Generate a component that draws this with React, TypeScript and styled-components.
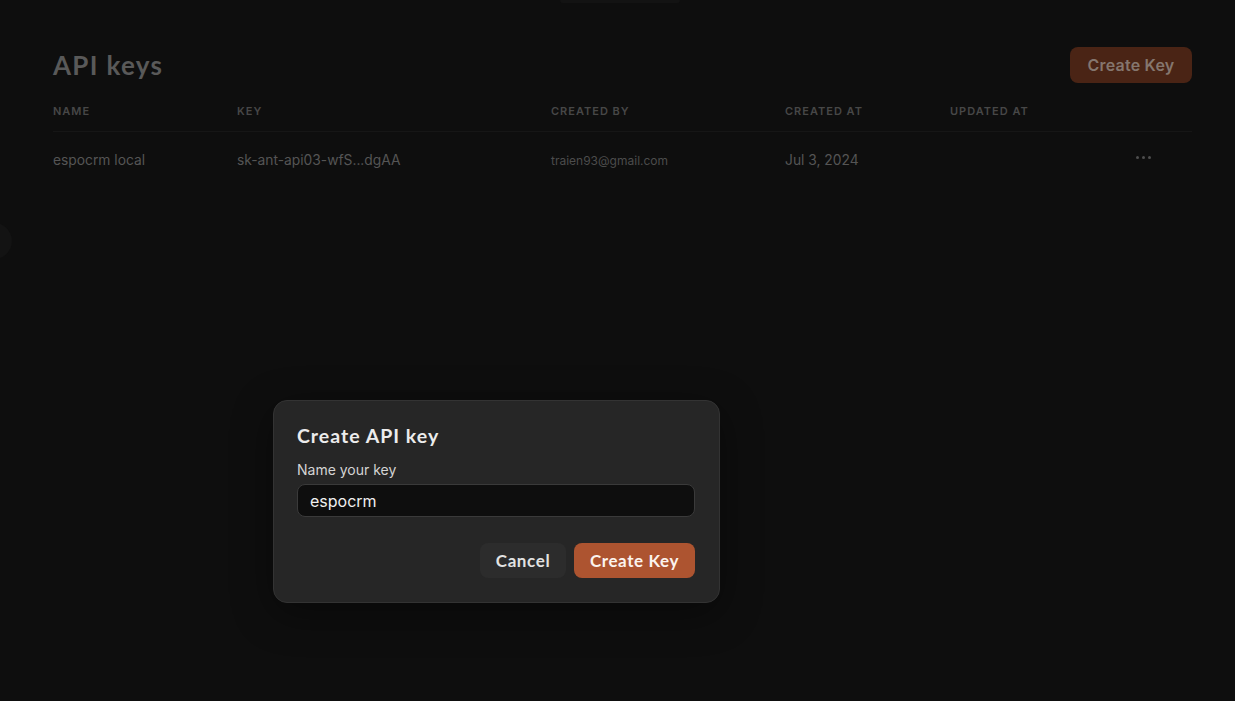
import React from "react";
import styled, { createGlobalStyle } from "styled-components";

const Global = createGlobalStyle`
  html, body { margin: 0; padding: 0; background: #0e0e0e; }
  body { font-family: "Inter", "Noto Sans", sans-serif; width: 1235px; height: 701px; overflow: hidden; }
  * { box-sizing: border-box; }
`;

const Page = styled.div`
  position: relative;
  width: 1235px;
  height: 701px;
  background: #0e0e0e;
  padding: 47px 43px 0 53px;
`;

const TopGlow = styled.div`
  position: absolute;
  top: 0;
  left: 560px;
  width: 120px;
  height: 3px;
  border-radius: 0 0 6px 6px;
  background: #131313;
`;

const SideTab = styled.div`
  position: absolute;
  left: -30px;
  top: 222px;
  width: 42px;
  height: 38px;
  border-radius: 50%;
  background: #131313;
`;

const Header = styled.div`
  display: flex;
  justify-content: space-between;
  align-items: center;
  height: 36px;
`;

const Title = styled.h1`
  margin: 0;
  font-family: "Lato", "Inter", sans-serif;
  font-weight: 700;
  font-size: 26px;
  letter-spacing: 1.3px;
  color: #595959;
`;

const DimButton = styled.button`
  height: 36px;
  width: 122px;
  border: none;
  border-radius: 8px;
  background: #4a2415;
  color: #85766e;
  font-family: "Inter", sans-serif;
  font-weight: 600;
  font-size: 16px;
  letter-spacing: 0.2px;
  white-space: nowrap;
`;

const Table = styled.div`
  margin-top: 20px;
  display: flex;
  flex-direction: column;
`;

const cols = "184px 314px 234px 165px 1fr 60px";

const HeadRow = styled.div`
  display: grid;
  grid-template-columns: ${cols};
  height: 29px;
  align-items: center;
  border-bottom: 1px solid #161616;
  padding-bottom: 12px;
`;

const HeadCell = styled.div`
  font-family: "Inter", sans-serif;
  font-size: 11px;
  font-weight: 600;
  letter-spacing: 1px;
  text-transform: uppercase;
  color: #474747;
`;

const BodyRow = styled.div`
  display: grid;
  grid-template-columns: ${cols};
  height: 54px;
  align-items: center;
`;

const Cell = styled.div<{ $small?: boolean }>`
  font-family: "Inter", sans-serif;
  font-size: ${(p) => (p.$small ? "12px" : "13.8px")};
  color: ${(p) => (p.$small ? "#4c4c4c" : "#555555")};
  padding-top: 2px;
`;

const Dots = styled.div`
  display: flex;
  gap: 3px;
  justify-content: flex-end;
  padding-right: 41px;
  padding-bottom: 4px;
`;

const Dot = styled.span`
  width: 3px;
  height: 3px;
  border-radius: 50%;
  background: #4e4e4e;
`;

const Modal = styled.div`
  position: absolute;
  left: 273px;
  top: 400px;
  width: 447px;
  height: 203px;
  background: #262626;
  border: 1px solid #333333;
  border-radius: 14px;
  padding: 22px 24px 24px 23px;
  display: flex;
  flex-direction: column;
  box-shadow: 0 10px 40px rgba(0, 0, 0, 0.4);
`;

const ModalTitle = styled.h2`
  margin: 0;
  font-family: "Lato", "Inter", sans-serif;
  font-weight: 700;
  font-size: 19.5px;
  letter-spacing: 1px;
  color: #ececec;
  line-height: 26px;
`;

const Label = styled.label`
  margin-top: 11px;
  font-family: "Inter", sans-serif;
  font-size: 14px;
  color: #d4d4d4;
  line-height: 20px;
`;

const Input = styled.div`
  margin-top: 4px;
  height: 35px;
  border: 1px solid #3a3a3a;
  border-radius: 8px;
  background: #0e0e0e;
  padding: 0 12px;
  display: flex;
  align-items: center;
  font-family: "Inter", sans-serif;
  font-size: 16px;
  color: #f0f0f0;
`;

const Actions = styled.div`
  margin-top: 26px;
  display: flex;
  justify-content: flex-end;
  gap: 8px;
`;

const Btn = styled.button<{ $primary?: boolean }>`
  height: 35px;
  border: none;
  border-radius: 8px;
  padding: 0;
  white-space: nowrap;
  font-family: "Lato", "Inter", sans-serif;
  font-weight: 700;
  font-size: 17px;
  letter-spacing: 0.6px;
  background: ${(p) => (p.$primary ? "#ad5430" : "#2c2c2c")};
  color: ${(p) => (p.$primary ? "#fbf3ee" : "#e2e2e2")};
  width: ${(p) => (p.$primary ? "121px" : "86px")};
`;

export default function App() {
  return (
    <>
      <Global />
      <Page>
        <TopGlow />
        <SideTab />
        <Header>
          <Title>API keys</Title>
          <DimButton>Create Key</DimButton>
        </Header>
        <Table>
          <HeadRow>
            <HeadCell>Name</HeadCell>
            <HeadCell>Key</HeadCell>
            <HeadCell>Created by</HeadCell>
            <HeadCell>Created at</HeadCell>
            <HeadCell>Updated at</HeadCell>
            <HeadCell />
          </HeadRow>
          <BodyRow>
            <Cell>espocrm local</Cell>
            <Cell>sk-ant-api03-wfS...dgAA</Cell>
            <Cell $small>traien93@gmail.com</Cell>
            <Cell>Jul 3, 2024</Cell>
            <Cell />
            <Dots>
              <Dot />
              <Dot />
              <Dot />
            </Dots>
          </BodyRow>
        </Table>
        <Modal>
          <ModalTitle>Create API key</ModalTitle>
          <Label>Name your key</Label>
          <Input>espocrm</Input>
          <Actions>
            <Btn>Cancel</Btn>
            <Btn $primary>Create Key</Btn>
          </Actions>
        </Modal>
      </Page>
    </>
  );
}
